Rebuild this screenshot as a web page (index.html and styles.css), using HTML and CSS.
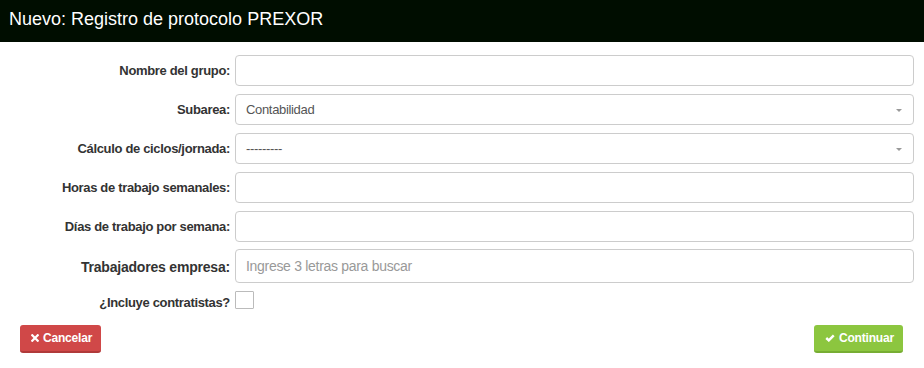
FILE: index.html
```html
<!DOCTYPE html>
<html lang="es">
<head>
<meta charset="utf-8">
<title>Nuevo: Registro de protocolo PREXOR</title>
<link rel="stylesheet" href="styles.css">
</head>
<body>
<header class="topbar">Nuevo: Registro de protocolo PREXOR</header>
<form class="form">
  <div class="row">
    <label class="lbl">Nombre del grupo:</label>
    <div class="field"><div class="input"></div></div>
  </div>
  <div class="row">
    <label class="lbl">Subarea:</label>
    <div class="field"><div class="input select"><span class="val">Contabilidad</span><span class="caret"></span></div></div>
  </div>
  <div class="row">
    <label class="lbl">Cálculo de ciclos/jornada:</label>
    <div class="field"><div class="input select"><span class="val">---------</span><span class="caret"></span></div></div>
  </div>
  <div class="row">
    <label class="lbl">Horas de trabajo semanales:</label>
    <div class="field"><div class="input"></div></div>
  </div>
  <div class="row">
    <label class="lbl">Días de trabajo por semana:</label>
    <div class="field"><div class="input"></div></div>
  </div>
  <div class="row">
    <label class="lbl big">Trabajadores empresa:</label>
    <div class="field"><div class="input tall"><span class="ph">Ingrese 3 letras para buscar</span></div></div>
  </div>
  <div class="row check-row">
    <label class="lbl">¿Incluye contratistas?</label>
    <div class="field"><span class="checkbox"></span></div>
  </div>
  <div class="actions">
    <button type="button" class="btn btn-red">
      <svg class="ico" viewBox="0 0 10 10" width="8" height="8"><path d="M1.6 1.6 L8.4 8.4 M8.4 1.6 L1.6 8.4" stroke="#fff" stroke-width="2.8" stroke-linecap="square" fill="none"/></svg>
      Cancelar
    </button>
    <button type="button" class="btn btn-green">
      <svg class="ico" viewBox="0 0 12 10" width="10" height="8"><path d="M1.3 5 L4.5 8 L10.7 1.7" stroke="#fff" stroke-width="3" fill="none"/></svg>
      Continuar
    </button>
  </div>
</form>
</body>
</html>
```
FILE: styles.css
```css
* { box-sizing: border-box; }
html, body { margin: 0; padding: 0; background: #fff; }
body {
  font-family: "Liberation Sans", Arial, Helvetica, sans-serif;
  color: #333;
  width: 924px;
  height: 368px;
  overflow: hidden;
}
.topbar {
  height: 42px;
  background: #000d00;
  color: #fff;
  font-size: 18px;
  line-height: 38px;
  padding-left: 9px;
}
.form {
  padding: 13px 10px 0 0;
  display: flex;
  flex-direction: column;
  gap: 8px;
}
.row {
  display: grid;
  grid-template-columns: 235px 1fr;
  align-items: center;
}
.lbl {
  font-size: 13px;
  font-weight: bold;
  text-align: right;
  padding-right: 5px;
  letter-spacing: -0.33px;
}
.lbl.big { font-size: 14px; letter-spacing: -0.2px; }
.input {
  height: 31px;
  border: 1px solid #ccc;
  border-radius: 4px;
  background: #fff;
  display: flex;
  align-items: center;
  padding: 0 11px 0 10px;
}
.input.tall { height: 34px; margin-top: -1px; }
.val { font-size: 13px; color: #555; flex: 1; letter-spacing: -0.33px; }
.ph { font-size: 14px; color: #999; letter-spacing: -0.3px; }
.caret {
  width: 0; height: 0;
  border-left: 3px solid transparent;
  border-right: 3px solid transparent;
  border-top: 3px solid #999;
  margin-top: 1px;
}
.check-row { align-items: end; }
.check-row .lbl { line-height: 16px; margin-bottom: -2px; }
.checkbox {
  display: block;
  width: 19px;
  height: 18px;
  border: 1px solid #bbb;
  border-radius: 1px;
  background: #fff;
}
.actions {
  display: flex;
  justify-content: space-between;
  padding-left: 20px;
  margin-top: 8px;
  padding-right: 11px;
}
.btn {
  height: 28px;
  border: 0;
  border-radius: 3px;
  color: #fff;
  font-family: "Liberation Sans", Arial, sans-serif;
  font-weight: bold;
  font-size: 12px;
  display: flex;
  align-items: center;
  gap: 4px;
  cursor: pointer;
  letter-spacing: -0.2px;
}
.btn-red {
  background: #d04848;
  border-bottom: 2px solid #b03a3a;
  padding: 0 10px 0 11px;
  width: 81px;
}
.btn-green {
  background: #8cc63f;
  border-bottom: 2px solid #77ad33;
  padding: 0 10px 0 11px;
  width: 89px;
}
.ico { display: block; flex: none; }
```
